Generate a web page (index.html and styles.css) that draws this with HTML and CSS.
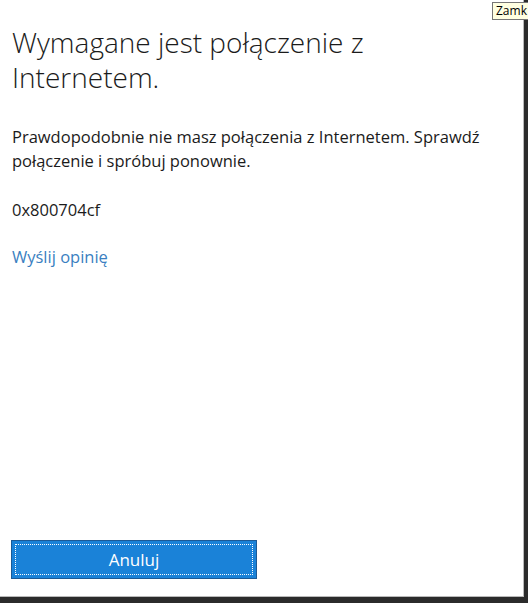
FILE: index.html
```html
<!DOCTYPE html>
<html lang="pl">
<head>
<meta charset="utf-8">
<title>Wymagane jest połączenie z Internetem</title>
<link rel="stylesheet" href="styles.css">
</head>
<body>
<div class="dialog">
  <div class="content">
    <h1 class="title">Wymagane jest połączenie z Internetem.</h1>
    <p class="message">Prawdopodobnie nie masz połączenia z Internetem. Sprawdź połączenie i spróbuj ponownie.</p>
    <p class="code">0x800704cf</p>
    <a class="feedback" href="#">Wyślij opinię</a>
  </div>
  <div class="actions">
    <button class="cancel" type="button"><span class="focus">Anuluj</span></button>
  </div>
</div>
<div class="tooltip">Zamk</div>
</body>
</html>
```
FILE: styles.css
```css
html, body {
  margin: 0;
  padding: 0;
}
body {
  background: #2b2b2b;
  width: 528px;
  height: 603px;
  overflow: hidden;
  position: relative;
  font-family: "Open Sans", "Noto Sans", sans-serif;
  color: #1b1b1b;
}
.dialog {
  width: 523px;
  height: 596px;
  background: #ffffff;
  border-right: 1px solid #b9b9b9;
  border-bottom: 1px solid #b9b9b9;
  display: flex;
  flex-direction: column;
  justify-content: space-between;
}
.content {
  padding: 25px 12px 0 12px;
  display: flex;
  flex-direction: column;
  align-items: flex-start;
}
.title {
  margin: 0;
  font-size: 28px;
  font-weight: 300;
  line-height: 35px;
  width: 400px;
}
.message {
  margin: 30px 0 0 0;
  font-size: 16.5px;
  line-height: 24px;
  width: 499px;
}
.code {
  margin: 25px 0 0 0;
  font-size: 16.5px;
  line-height: 24px;
}
.feedback {
  margin-top: 23px;
  font-size: 16.5px;
  line-height: 24px;
  color: #3a7fc1;
  text-decoration: none;
}
.actions {
  padding: 0 0 17px 11px;
}
.cancel {
  width: 246px;
  height: 39px;
  margin: 0;
  padding: 3px;
  border: 1px solid #1c5a96;
  background: #1a82d8;
  display: flex;
  cursor: pointer;
}
.focus {
  flex: 1;
  border: 1px dotted #ffffff;
  display: flex;
  align-items: center;
  justify-content: center;
  color: #ffffff;
  font-family: "Open Sans", "Noto Sans", sans-serif;
  font-size: 17px;
}
.tooltip {
  position: absolute;
  left: 492px;
  top: 2px;
  height: 16px;
  padding: 0 2px 0 3px;
  background: #ffffe1;
  border: 1px solid #767676;
  border-right: none;
  font-size: 12px;
  line-height: 16px;
  color: #000;
  white-space: nowrap;
}
```
